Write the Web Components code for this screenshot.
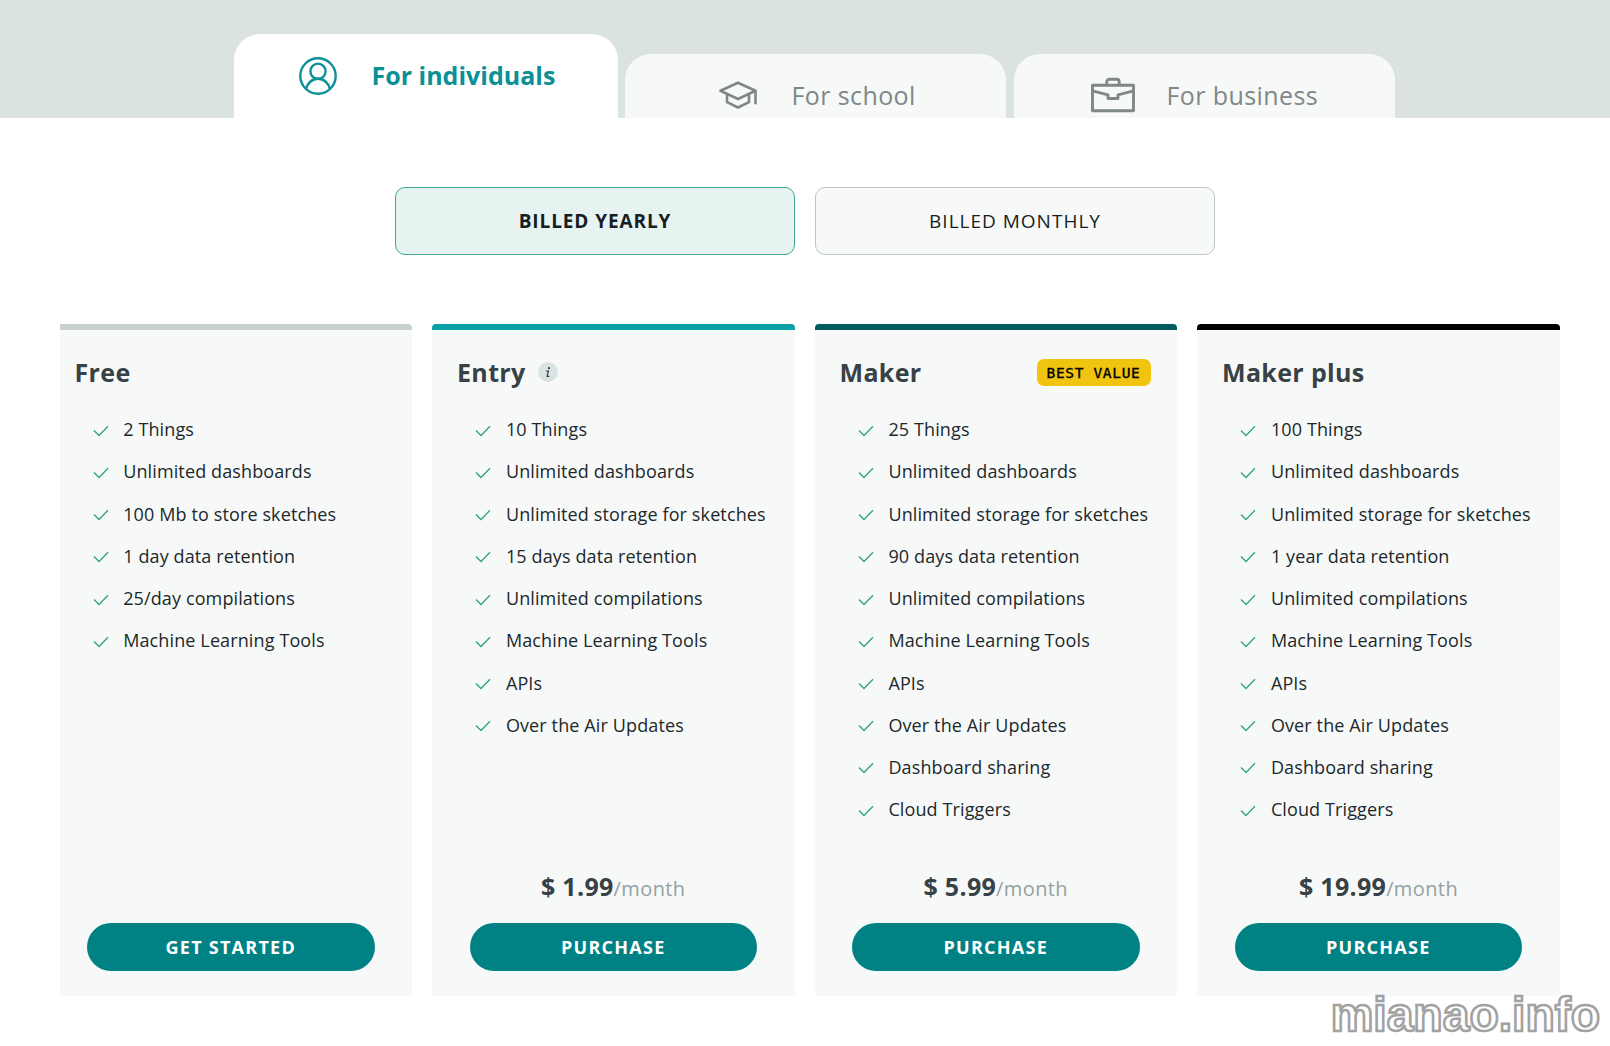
<!DOCTYPE html>
<html lang="en">
<head>
<meta charset="utf-8">
<title>Plans</title>
<style>
body{margin:0;background:#fff;font-family:"Open Sans","Noto Sans",sans-serif;color:#374146;width:1610px;height:1046px;overflow:hidden}
</style>
</head>
<body>
<pricing-page></pricing-page>
<script>
const define = (name, html, setup) => customElements.define(name, class extends HTMLElement {
  connectedCallback() {
    if (this.shadowRoot) return;
    const root = this.attachShadow({ mode: 'open' });
    root.innerHTML = html;
    if (setup) setup(this, root);
  }
});

const ICONS = {
  person: '<svg width="38" height="38" viewBox="0 0 38 38" stroke-width="2.4"><circle cx="19" cy="19" r="17.7"/><circle cx="19" cy="14.2" r="7.6"/><path d="M7 32c1.300-5.800 6-10.200 12-10.200s10.700 4.400 12 10.200"/></svg>',
  cap: '<svg width="38" height="38" viewBox="0 0 38 38" stroke-width="2.6" stroke-linejoin="round"><path d="M1.500 14.800 19 6.800l17.500 8L19 23z"/><path d="M8 18.500v7.700L19 31.500l11-5.300v-7.700M36.500 14.800v13.400"/></svg>',
  bag: '<svg width="44" height="38" viewBox="0 0 44 38" stroke-width="2.9" stroke-linejoin="round"><rect x="1.500" y="9.300" width="41" height="25.400"/><path d="M15.800 9V5.800a2.500 2.500 0 0 1 2.500-2.500h7.400a2.500 2.500 0 0 1 2.500 2.500V9M1.500 14.800l15.500 4v3.700h10v-3.700l15.500-4"/></svg>'
};

define('plan-tab', `<style>
:host{display:flex;box-sizing:border-box;width:381px;height:64px;padding:22px 0 0 var(--lead);align-items:flex-start;gap:var(--gap);border-radius:26px 26px 0 0;background:#f6f9f8;color:#7f8787;font-size:25px;letter-spacing:.4px}
:host([active]){width:384px;height:84px;padding-top:23px;background:#fff;color:#0b9096;font-weight:700;letter-spacing:0}
.label{line-height:38px;white-space:nowrap}
:host([active]) .label{line-height:36px}
svg{display:block;fill:none;stroke:currentColor}
.icon{flex:none}
</style><div class="icon"></div><div class="label"><slot></slot></div>`,
  (el, root) => root.querySelector('.icon').innerHTML = ICONS[el.getAttribute('icon')]);

define('billing-option', `<style>
:host{display:flex;box-sizing:border-box;width:400px;height:68px;padding-bottom:1px;align-items:center;justify-content:center;border:1px solid #bdc4c4;border-radius:10px;background:#f7f9f9;color:#171e21;font-size:19px;letter-spacing:1px}
:host([active]){border-color:#3fa793;background:#e7f3f1;font-weight:700;letter-spacing:.9px}
</style><span><slot></slot></span>`);

define('plan-feature', `<style>
:host{display:flex;height:42.240px;align-items:center;font-size:18px;letter-spacing:.12px;color:#20282b;white-space:nowrap}
svg{width:16px;height:12px;flex:none;margin:3px 14.500px 0 0;fill:none;stroke:#2fa579;stroke-width:1.300}
</style><svg viewBox="0 0 16 12"><path d="M1 5.500 6 10.500 15 1.200"/></svg><span><slot></slot></span>`);

define('info-dot', `<style>
:host{display:flex;width:20px;height:20px;border-radius:50%;background:#dae3e3;align-items:center;justify-content:center}
</style><svg width="20" height="20" viewBox="0 0 20 20" fill="none" stroke="#374146" stroke-width="1.200"><circle cx="11" cy="6.200" r=".5"/><path d="M8.200 9.200h2.200l-1.300 5.200h2.200"/></svg>`);

define('value-badge', `<style>
:host{display:flex;box-sizing:border-box;width:114px;height:27px;padding-top:1px;border-radius:7px;background:#f1c40f;color:#000;align-items:center;justify-content:center;font:14.500px "DejaVu Sans Mono",monospace;letter-spacing:.650px;-webkit-text-stroke:.35px #000;white-space:nowrap}
</style><span><slot></slot></span>`);

define('plan-button', `<style>
:host{display:flex;height:48px;border-radius:24px;background:#008184;color:#fff;align-items:center;justify-content:center;font-size:18px;font-weight:700;letter-spacing:1.250px}
</style><span><slot></slot></span>`);

define('plan-card', `<style>
:host{display:flex;flex-direction:column;box-sizing:border-box;width:362.500px;height:672px;border-top:6px solid var(--accent);border-radius:4px 4px 0 0;background:#f7f9f9}
:host([first]){width:352px;border-top-left-radius:0}
:host([last]){width:363px}
header{display:flex;height:82px;box-sizing:border-box;padding:0 26.500px 0 25px;align-items:center}
:host([first]) header{padding-left:14.500px}
h2{margin:1px 0 0;font-size:25px;line-height:34px;font-weight:700;letter-spacing:.35px;color:#374146;white-space:nowrap}
info-dot{margin:2px 0 0 12px}
value-badge{margin:3px 0 0 auto}
.list{padding:0 0 0 43.400px;margin-top:-4px;flex:1}
:host([first]) .list{padding-left:32.700px}
.price{text-align:center;font-size:20px;line-height:38px;letter-spacing:.4px;color:#95a0a1;padding-bottom:15px}
.price b{font-size:25px;letter-spacing:.3px;color:#374146}
footer{padding:0 37.500px 25px}
:host([last]) footer{padding-right:38px}
:host([first]) footer{padding-left:27px}
</style><header><h2></h2></header><div class="list"></div><div class="price"></div><footer><plan-button></plan-button></footer>`,
  (el, root) => {
    root.querySelector('h2').textContent = el.getAttribute('name');
    const header = root.querySelector('header');
    if (el.hasAttribute('info')) header.append(document.createElement('info-dot'));
    if (el.getAttribute('badge')) {
      const b = document.createElement('value-badge');
      b.textContent = el.getAttribute('badge');
      header.append(b);
    }
    for (const f of el.getAttribute('features').split('|')) {
      const row = document.createElement('plan-feature');
      row.textContent = f;
      root.querySelector('.list').append(row);
    }
    const price = el.getAttribute('price');
    root.querySelector('.price').innerHTML = price ? `<b>${price}</b>/month` : '';
    root.querySelector('plan-button').textContent = el.getAttribute('action');
  });

define('site-watermark', `<style>
:host{display:block;position:absolute;right:10px;bottom:3px;font:bold 48px/56px "Liberation Sans",Arial,sans-serif;color:#fff;-webkit-text-stroke:2.500px #a2a2a2;text-shadow:0 0 1px #888;white-space:nowrap}
</style><slot></slot>`);

define('pricing-page', `<style>
:host{display:block;position:relative;width:1610px;height:1046px}
nav{display:flex;height:118px;box-sizing:border-box;padding-left:234px;align-items:flex-end;background:#dae3e2}
.billing{display:flex;justify-content:center;gap:20px;padding-top:69px}
.cards{display:flex;gap:20px;padding:69px 50px 0 60px}
plan-tab + plan-tab{margin-left:7px}
plan-tab + plan-tab + plan-tab{margin-left:8px}
</style>
<nav>
<plan-tab active icon="person" style="--lead:65px;--gap:34.500px">For individuals</plan-tab>
<plan-tab icon="cap" style="--lead:94px;--gap:34.500px">For school</plan-tab>
<plan-tab icon="bag" style="--lead:77px;--gap:31.500px">For business</plan-tab>
</nav>
<div class="billing"><billing-option active>BILLED YEARLY</billing-option><billing-option>BILLED MONTHLY</billing-option></div>
<div class="cards">
<plan-card first name="Free" style="--accent:#c9d0d0" action="GET STARTED" features="2 Things|Unlimited dashboards|100 Mb to store sketches|1 day data retention|25/day compilations|Machine Learning Tools"></plan-card>
<plan-card name="Entry" info style="--accent:#0ca1a6" price="$ 1.99" action="PURCHASE" features="10 Things|Unlimited dashboards|Unlimited storage for sketches|15 days data retention|Unlimited compilations|Machine Learning Tools|APIs|Over the Air Updates"></plan-card>
<plan-card name="Maker" badge="BEST VALUE" style="--accent:#005c5f" price="$ 5.99" action="PURCHASE" features="25 Things|Unlimited dashboards|Unlimited storage for sketches|90 days data retention|Unlimited compilations|Machine Learning Tools|APIs|Over the Air Updates|Dashboard sharing|Cloud Triggers"></plan-card>
<plan-card last name="Maker plus" style="--accent:#000" price="$ 19.99" action="PURCHASE" features="100 Things|Unlimited dashboards|Unlimited storage for sketches|1 year data retention|Unlimited compilations|Machine Learning Tools|APIs|Over the Air Updates|Dashboard sharing|Cloud Triggers"></plan-card>
</div>
<site-watermark>mianao.info</site-watermark>`);
</script>
</body>
</html>
